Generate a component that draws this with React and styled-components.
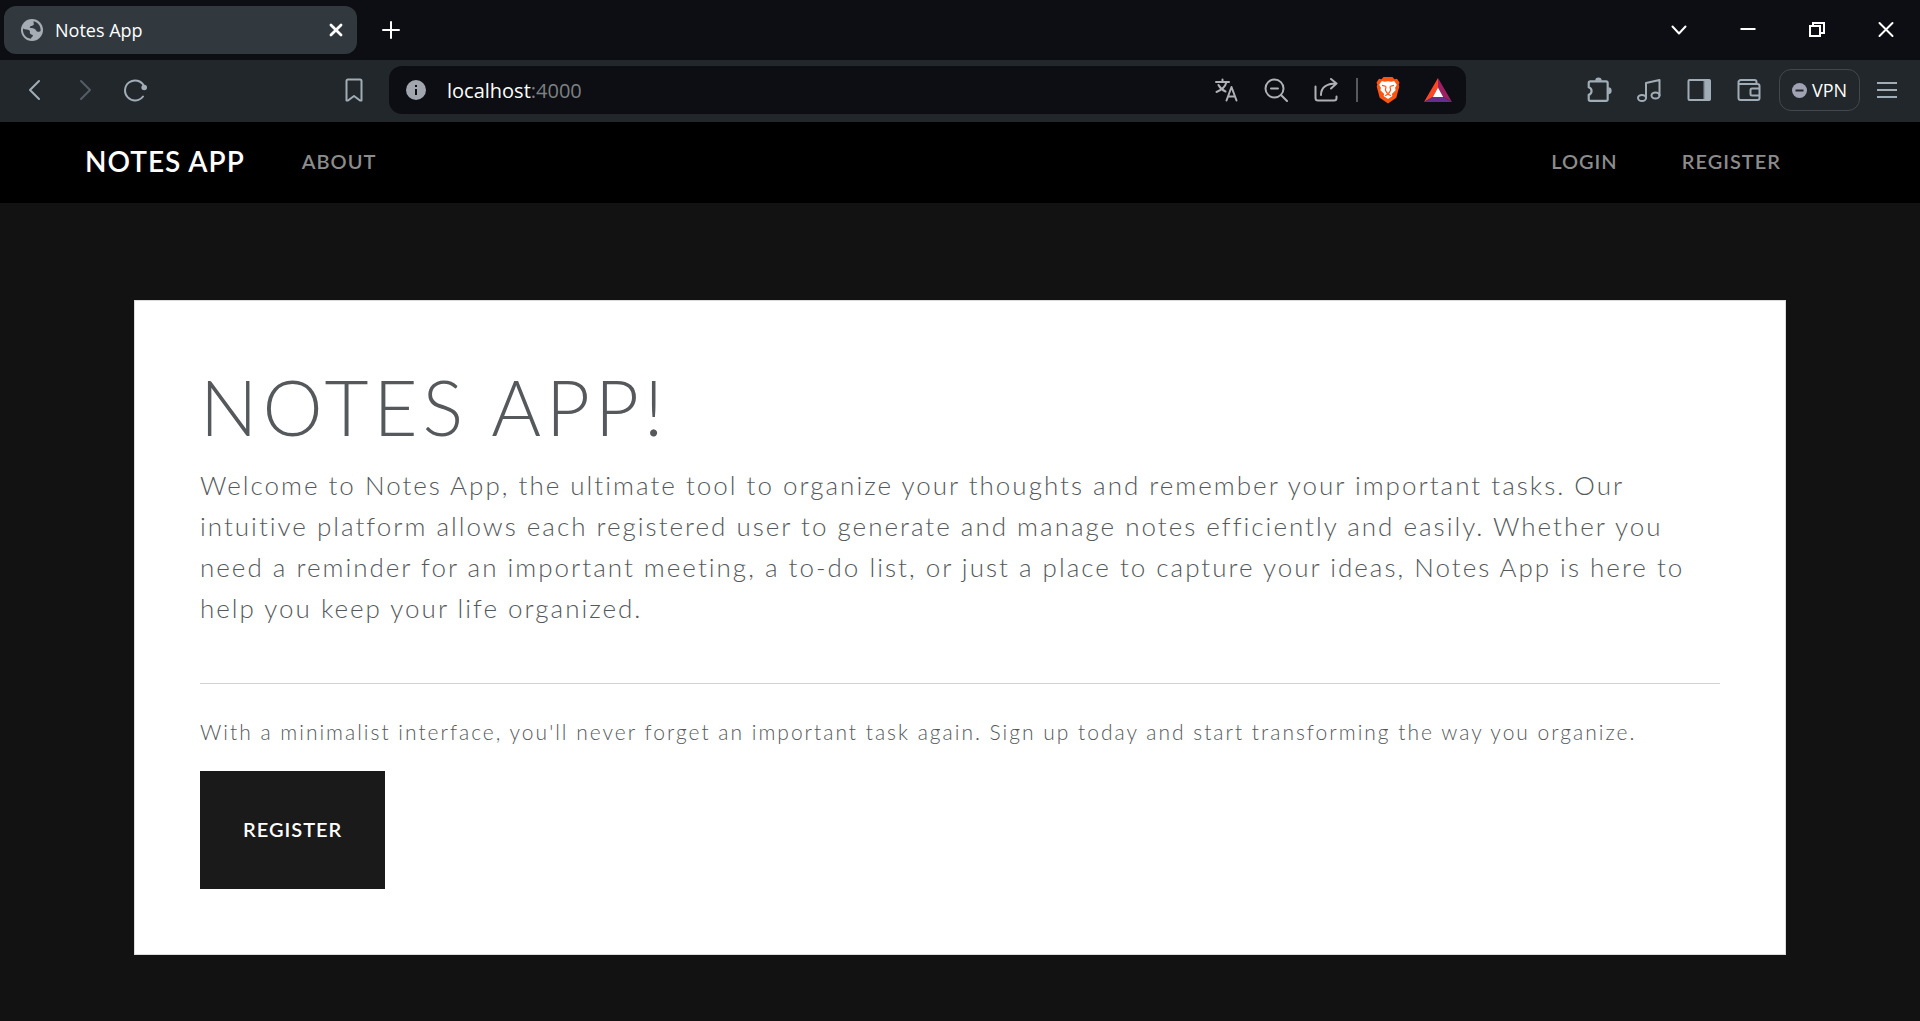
import React from "react";
import styled, { createGlobalStyle } from "styled-components";

const uiFont = `"Open Sans", "Noto Sans", sans-serif`;
const pageFont = `Lato, "Open Sans", sans-serif`;

const GlobalStyle = createGlobalStyle`
  *, *::before, *::after { box-sizing: border-box; }
  body { margin: 0; background: #121212; font-family: ${pageFont}; }
  h1, p { margin: 0; }
  button { font: inherit; border: 0; background: none; padding: 0; cursor: pointer; }
  a { text-decoration: none; }
`;

const Window = styled.div`
  min-height: 100vh;
  display: flex;
  flex-direction: column;
`;

const TabStrip = styled.div`
  height: 60px;
  display: flex;
  align-items: center;
  padding-left: 4px;
  background: #0d0e13;
  font-family: ${uiFont};
`;

const Tab = styled.div`
  width: 353px;
  height: 48px;
  display: flex;
  align-items: center;
  gap: 12px;
  padding: 0 10px 0 17px;
  border-radius: 12px;
  background: #31393f;
  color: #fff;
  font-size: 18px;
  line-height: 24px;
`;

const TabTitle = styled.span`
  flex: 1;
`;

const IconButton = styled.button`
  width: ${(p) => p.$width || 50}px;
  height: ${(p) => p.$height || 50}px;
  display: flex;
  align-items: center;
  justify-content: center;
  color: ${(p) => p.$color || "#a1adb6"};
`;

const WindowControls = styled.div`
  margin-left: auto;
  display: flex;
`;

const NewTab = styled.div`
  margin-left: 9px;
`;

const Toolbar = styled.div`
  height: 62px;
  display: flex;
  align-items: center;
  padding-bottom: 2px;
  background: #22272b;
  font-family: ${uiFont};
`;

const HistoryControls = styled.div`
  width: 389px;
  padding: 0 10px;
  display: flex;
`;

const BookmarkSlot = styled.div`
  margin-left: auto;
`;

const AddressBar = styled.div`
  flex: 1;
  height: 48px;
  display: flex;
  align-items: center;
  padding: 0 3px 0 16px;
  border-radius: 13px;
  background: #0d0e13;
`;

const Address = styled.label`
  flex: 1;
  display: flex;
  align-items: center;
  padding-left: 20px;
  color: #7e8084;
  font-size: 20px;
`;

const AddressInput = styled.input`
  field-sizing: content;
  border: 0;
  outline: 0;
  padding: 0;
  background: none;
  color: #fff;
  font: inherit;
`;

const Separator = styled.span`
  width: 2px;
  height: 24px;
  margin: 0 5px;
  background: #57595e;
`;

const Tools = styled.div`
  width: 454px;
  padding-right: 8px;
  display: flex;
  align-items: center;
  justify-content: flex-end;
`;

const VpnButton = styled.button`
  width: 81px;
  height: 42px;
  margin: 0 2px 0 5px;
  display: flex;
  align-items: center;
  justify-content: center;
  gap: 5px;
  border: 1px solid #43484e;
  border-radius: 12px;
  color: #fff;
  font-size: 18px;
`;

const Nav = styled.nav`
  height: 81px;
  display: flex;
  align-items: center;
  padding: 0 139px 4px 85px;
  background: #000;
  text-transform: uppercase;
  letter-spacing: 1px;
`;

const Brand = styled.a`
  color: #fff;
  font-size: 28px;
  font-weight: 600;
  line-height: 40px;
`;

const NavLinks = styled.div`
  display: flex;
  gap: 64px;
  margin-left: ${(p) => (p.$end ? "auto" : "57px")};
`;

const NavLink = styled.a`
  color: #8c8c8c;
  font-size: 20px;
  font-weight: 600;
  line-height: 40px;
`;

const Main = styled.main`
  padding: 97px 134px 66px;
`;

const Hero = styled.section`
  padding: 64px 65px 65px;
  border: 1px solid #d9dbdc;
  background: #fff;
  color: #55595c;
  font-weight: 300;
`;

const Title = styled.h1`
  font-size: 76px;
  font-weight: 300;
  line-height: 84px;
  letter-spacing: 5px;
  text-transform: uppercase;
`;

const Lead = styled.p`
  margin-top: 16px;
  padding-right: 32px;
  font-size: 26px;
  line-height: 41px;
  letter-spacing: 2px;
`;

const Rule = styled.hr`
  margin: 54px 0 32px;
  border: 0;
  border-top: 1px solid #d3d4d5;
`;

const Note = styled.p`
  font-size: 21px;
  line-height: 32px;
  letter-spacing: 2px;
`;

const RegisterLink = styled.a`
  display: inline-flex;
  align-items: center;
  margin-top: 23px;
  padding: 43px 43px 45px;
  background: #1a1a1a;
  color: #fff;
  font-size: 20px;
  font-weight: 600;
  line-height: 30px;
  letter-spacing: 1px;
  text-transform: uppercase;
`;

const Icon = ({ size = 24, width = 2, children }) => (
  <svg width={size} height={size} viewBox="0 0 24 24" fill="none" stroke="currentColor"
    strokeWidth={width} strokeLinecap="round" strokeLinejoin="round" aria-hidden="true">
    {children}
  </svg>
);

const Globe = () => (
  <svg width="22" height="22" viewBox="0 0 22 22" aria-hidden="true">
    <circle cx="11" cy="11" r="11" fill="#a7adb5" />
    <path d="M12.5 2.2c-.2 2 .9 2.500 0 3.700-.8 1.100-3.500.5-3.700 2.400-.1 1.300 2.500.8 4.600 1.400 1.900.6 1.300 2.700 3.300 3 1.300.2 2.500-.2 2.900-.8.500-4.800-2.600-8.500-7.100-9.700zM2.100 9.500c1.800 1.300 4.800.5 6.400 1.900 1.200 1.200-.4 2.300.9 3.500.9.800 2.600.4 2.500 1.900-.1 1.200-1.700 1.400-2 2.900C5 19.300 1.200 14.700 2.100 9.500z" fill="#31393f" />
  </svg>
);

const Lion = () => (
  <svg width="24" height="28" viewBox="0 0 24 28" aria-hidden="true">
    <path d="M7.500 1h9l2 2.200 2.500-.4 2.500 3.700-.8 2.300.6 1.800-3 11.200L12 27.500 3.700 21.800.7 10.600l.6-1.800-.8-2.300L3 2.800l2.500.4z" fill="#fb5411" />
    <path d="M12 5.200l3.200.5 3-.7 2.600 3.700-1.700 3.100.5 2.500-3.800 3.600.6 2.200L12 23l-4.400-2.900.6-2.200-3.800-3.600.5-2.500-1.700-3.100L5.800 5l3 .7z" fill="#fff" />
    <path d="M6 9.300l4.300 1.200M18 9.300l-4.300 1.200M10 11l-.6 3 1.200 2.500M14 11l.6 3-1.200 2.500M9.200 19.700l2.800-1.700 2.800 1.700M10.500 16.500L12 17.500l1.500-1" fill="none" stroke="#fb5411" strokeWidth="1.200" />
  </svg>
);

const Triangle = () => (
  <svg width="28" height="24" viewBox="0 0 28 24" aria-hidden="true">
    <path d="M14 0L0 24l8.800-5L14 9.500z" fill="#ff4724" />
    <path d="M14 0l14 24-8.800-5L14 9.500z" fill="#9e1f63" />
    <path d="M0 24h28l-8.800-5H8.800z" fill="#662d91" />
    <path d="M14 9.500L19.200 19H8.800z" fill="#fff" />
  </svg>
);

export default function App() {
  return (
    <Window>
      <GlobalStyle />
      <TabStrip>
        <Tab>
          <Globe />
          <TabTitle>Notes App</TabTitle>
          <IconButton $width={22} $height={22} $color="#fff" aria-label="Close tab">
            <Icon size={22} width={3}><path d="M6.500 6.500l11 11M17.500 6.500l-11 11" /></Icon>
          </IconButton>
        </Tab>
        <NewTab>
          <IconButton $color="#fff" aria-label="New tab">
            <Icon><path d="M12 4v16M4 12h16" /></Icon>
          </IconButton>
        </NewTab>
        <WindowControls>
          <IconButton $width={69} $color="#fff" aria-label="Search tabs">
            <Icon><path d="M5.500 8.500L12 15.500l6.500-7" /></Icon>
          </IconButton>
          <IconButton $width={69} $color="#fff" aria-label="Minimize">
            <Icon><path d="M4.500 11h15" strokeLinecap="butt" /></Icon>
          </IconButton>
          <IconButton $width={69} $color="#fff" aria-label="Restore">
            <Icon><path d="M5 8h10v10H5zM8 8V5h11v10h-4" strokeLinejoin="miter" strokeLinecap="butt" /></Icon>
          </IconButton>
          <IconButton $width={69} $color="#fff" aria-label="Close window">
            <Icon><path d="M5.500 5l13 13M18.500 5l-13 13" /></Icon>
          </IconButton>
        </WindowControls>
      </TabStrip>

      <Toolbar>
        <HistoryControls>
          <IconButton aria-label="Back"><Icon><path d="M16 3l-9 9 9 9" /></Icon></IconButton>
          <IconButton $color="#555d65" aria-label="Forward"><Icon><path d="M8 3l9 9-9 9" /></Icon></IconButton>
          <IconButton aria-label="Reload">
            <Icon>
              <path d="M20 18.500A10 10 0 1 1 21 8" />
              <circle cx="21.200" cy="9.500" r="2.800" fill="currentColor" stroke="none" />
            </Icon>
          </IconButton>
          <BookmarkSlot>
            <IconButton aria-label="Bookmark">
              <Icon><path d="M4.500 3a1.500 1.500 0 0 1 1.500-1.500h12A1.500 1.500 0 0 1 19.500 3v19.500h-1.500l-6-4.500-6 4.500H4.500z" /></Icon>
            </IconButton>
          </BookmarkSlot>
        </HistoryControls>
        <AddressBar>
          <IconButton $width={22} $height={22} aria-label="Site information">
            <svg width="20" height="20" viewBox="0 0 20 20" aria-hidden="true">
              <circle cx="10" cy="10" r="10" fill="#a1a5ae" />
              <path d="M9 5h2v2H9zM9 9h2v6H9z" fill="#0d0e13" />
            </svg>
          </IconButton>
          <Address>
            <AddressInput aria-label="Address" defaultValue="localhost" />
            <span>:4000</span>
          </Address>
          <IconButton $color="#adb0b5" aria-label="Translate">
            <Icon>
              <path d="M2 4h13M8.500 1.500V4M12.500 4c-1 4-5 8-10 10M4.500 7c1.500 3 4 5.200 7 6.500" />
              <path d="M12.500 22.500l5-13.500 5 13.500M14 18.500h7" />
            </Icon>
          </IconButton>
          <IconButton $color="#adb0b5" aria-label="Zoom out">
            <Icon><circle cx="10.500" cy="10.500" r="9" /><path d="M17 17l6 6M7 10.500h7" /></Icon>
          </IconButton>
          <IconButton $color="#adb0b5" aria-label="Share">
            <Icon><path d="M1.500 8.500V20A2.500 2.500 0 0 0 4 22.500h16a2.500 2.500 0 0 0 2.500-2.500v-1.500M7 17c0-7 5-11.500 15-11.500M17 1l5.500 4.500L17 10.500" /></Icon>
          </IconButton>
          <Separator />
          <IconButton aria-label="Shields"><Lion /></IconButton>
          <IconButton aria-label="Rewards"><Triangle /></IconButton>
        </AddressBar>
        <Tools>
          <IconButton aria-label="Extensions">
            <Icon size={26}>
              <path d="M4 4h14.500A1.500 1.500 0 0 1 20 5.500v15a1.500 1.500 0 0 1-1.500 1.500H4a1.500 1.500 0 0 1-1.500-1.500V16.500C6 15.500 6 10.500 2.500 9.500v-4A1.500 1.500 0 0 1 4 4z" />
              <path d="M8.500 3.500a3 3 0 0 1 6 0zM20.500 9.500a3.200 3.200 0 0 1 0 6.400z" fill="currentColor" stroke="none" />
            </Icon>
          </IconButton>
          <IconButton aria-label="Media">
            <Icon><ellipse cx="5" cy="20" rx="4" ry="3" /><ellipse cx="18.500" cy="17.500" rx="4" ry="3" /><path d="M9 20V5l13.500-3v15.500" /></Icon>
          </IconButton>
          <IconButton aria-label="Sidebar">
            <Icon><rect x="1.500" y="2" width="21.500" height="20" rx="1" /><path d="M17.500 2H23v20h-5.500z" fill="currentColor" strokeWidth="1" /></Icon>
          </IconButton>
          <IconButton aria-label="Wallet">
            <Icon><path d="M1.500 3.500V20A2 2 0 0 0 3.500 22h17a2 2 0 0 0 2-2V8a2 2 0 0 0-2-2H2M1.500 5a2.500 2.500 0 0 1 2.500-3h13.500a2 2 0 0 1 2 2v2M22.500 10.500H15a1.500 1.500 0 0 0-1.500 1.500v4a1.500 1.500 0 0 0 1.500 1.500h7.500" /></Icon>
          </IconButton>
          <VpnButton>
            <svg width="15" height="15" viewBox="0 0 15 15" aria-hidden="true">
              <circle cx="7.500" cy="7.500" r="7.500" fill="#a1a2b4" />
              <path d="M3.500 6.500h8v2h-8z" fill="#22272b" />
            </svg>
            VPN
          </VpnButton>
          <IconButton aria-label="Menu">
            <Icon><path d="M2 5h20M2 12h20M2 19h20" strokeLinecap="butt" /></Icon>
          </IconButton>
        </Tools>
      </Toolbar>

      <Nav>
        <Brand href="#home">Notes App</Brand>
        <NavLinks><NavLink href="#about">About</NavLink></NavLinks>
        <NavLinks $end>
          <NavLink href="#login">Login</NavLink>
          <NavLink href="#register">Register</NavLink>
        </NavLinks>
      </Nav>

      <Main>
        <Hero>
          <Title>Notes App!</Title>
          <Lead>
            Welcome to Notes App, the ultimate tool to organize your thoughts and remember your
            important tasks. Our intuitive platform allows each registered user to generate and
            manage notes efficiently and easily. Whether you need a reminder for an important
            meeting, a to-do list, or just a place to capture your ideas, Notes App is here to help
            you keep your life organized.
          </Lead>
          <Rule />
          <Note>
            With a minimalist interface, you'll never forget an important task again. Sign up today
            and start transforming the way you organize.
          </Note>
          <RegisterLink href="#register">Register</RegisterLink>
        </Hero>
      </Main>
    </Window>
  );
}
